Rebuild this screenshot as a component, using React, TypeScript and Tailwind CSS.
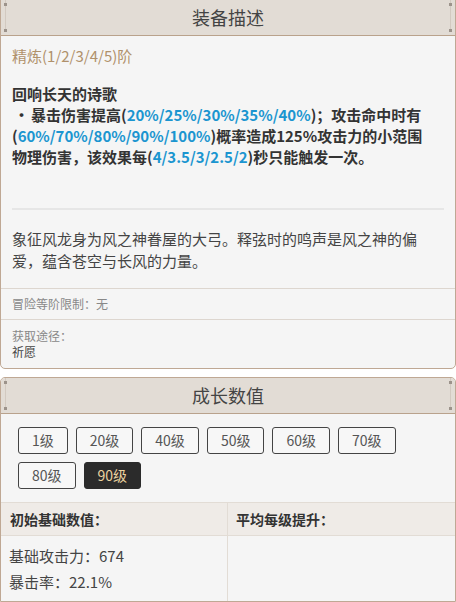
import React from 'react'

const font = { fontFamily: '"Noto Sans CJK SC", "Noto Sans", sans-serif' }

function Header({ title }: { title: string }) {
  return (
    <div className="relative flex h-[36px] items-center justify-center border-b border-[#b9a28c] bg-[#e2dcd5] text-[18px] text-[#444]">
      <span className="absolute left-[4px] top-0 bottom-[4px] w-px bg-[#d2c9c0]" />
      <span className="absolute right-[4px] top-0 bottom-[4px] w-px bg-[#d2c9c0]" />
      <span className="absolute left-[3px] top-[3px] h-[3px] w-[3px] bg-[#9c938b]" />
      <span className="absolute right-[3px] top-[3px] h-[3px] w-[3px] bg-[#9c938b]" />
      <span className="absolute left-[3px] bottom-[3px] h-[3px] w-[3px] bg-[#9c938b]" />
      <span className="absolute right-[3px] bottom-[3px] h-[3px] w-[3px] bg-[#9c938b]" />
      {title}
    </div>
  )
}

const levels = ['1级', '20级', '40级', '50级', '60级', '70级', '80级', '90级']

export default function App() {
  const b = (t: string) => <span className="text-[#1b95d0]">{t}</span>
  return (
    <div className="min-h-[602px] w-[456px] overflow-hidden bg-white" style={font}>
      {/* 装备描述 */}
      <div className="-mt-[3px] overflow-hidden rounded-b-[5px] border border-[#bfa894] bg-[#f5f5f5]">
        <div className="pt-[2px]">
          <Header title="装备描述" />
        </div>
        <div className="px-[11px] pt-[9px] pb-[16px]">
          <div className="text-[15px] leading-[22px] text-[#b0916b]">精炼(1/2/3/4/5)阶</div>
          <div className="mt-[16px] text-[15px] font-bold leading-[21px] text-[#333]">
            <div>回响长天的诗歌</div>
            <div>
              <span className="inline-block w-[19px] pl-[2px]">•</span>暴击伤害提高({b('20%/25%/30%/35%/40%')})；攻击命中时有
              <br />({b('60%/70%/80%/90%/100%')})概率造成125%攻击力的小范围
              <br />物理伤害，该效果每({b('4/3.5/3/2.5/2')})秒只能触发一次。
            </div>
          </div>
          <div className="mt-[41px] h-[2px] bg-[#e6e6e6]" />
          <div className="mt-[18px] text-[15px] leading-[22px] text-[#444]">
            象征风龙身为风之神眷屋的大弓。释弦时的鸣声是风之神的偏
            <br />爱，蕴含苍空与长风的力量。
          </div>
        </div>
        <div className="border-t border-[#ddd6cf] px-[11px] py-[6px] text-[12px] leading-[18px] text-[#888]">
          冒险等阶限制：无
        </div>
        <div className="border-t border-[#ddd6cf] px-[11px] pt-[8px] pb-[8px] text-[12px] leading-[16px]">
          <div className="text-[#888]">获取途径：</div>
          <div className="text-[#444]">祈愿</div>
        </div>
      </div>

      {/* 成长数值 */}
      <div className="mt-[8px] overflow-hidden rounded-t-[5px] border border-[#bfa894] bg-[#f5f5f5]">
        <Header title="成长数值" />
        <div className="flex flex-wrap gap-x-[8px] gap-y-[8px] px-[17px] pt-[13px] pb-[13px]">
          {levels.map(l => (
            <div
              key={l}
              className={
                l === '90级'
                  ? 'flex h-[27px] items-center rounded-[3px] border border-[#2b2b2b] bg-[#2b2b2b] px-[13px] text-[14px] text-[#ecd3a0]'
                  : 'flex h-[27px] items-center rounded-[3px] border border-[#444] bg-[#f7f7f7] px-[13px] text-[14px] text-[#555]'
              }
            >
              {l}
            </div>
          ))}
        </div>
        <div className="grid grid-cols-[227px_1fr] border-t border-[#e2dcd5] text-[14px]">
          <div className="flex h-[33px] items-center border-r border-b border-[#e2dcd5] bg-[#efebe7] px-[9px] font-bold text-[#333]">
            初始基础数值：
          </div>
          <div className="flex h-[33px] items-center border-b border-[#e2dcd5] bg-[#efebe7] px-[8px] font-bold text-[#333]">
            平均每级提升：
          </div>
          <div className="border-r border-[#e2dcd5] px-[8px] pt-[7px] pb-[6px] text-[15px] leading-[26px] text-[#444]">
            <div>基础攻击力：674</div>
            <div>暴击率：22.1%</div>
          </div>
          <div />
        </div>
      </div>
    </div>
  )
}
